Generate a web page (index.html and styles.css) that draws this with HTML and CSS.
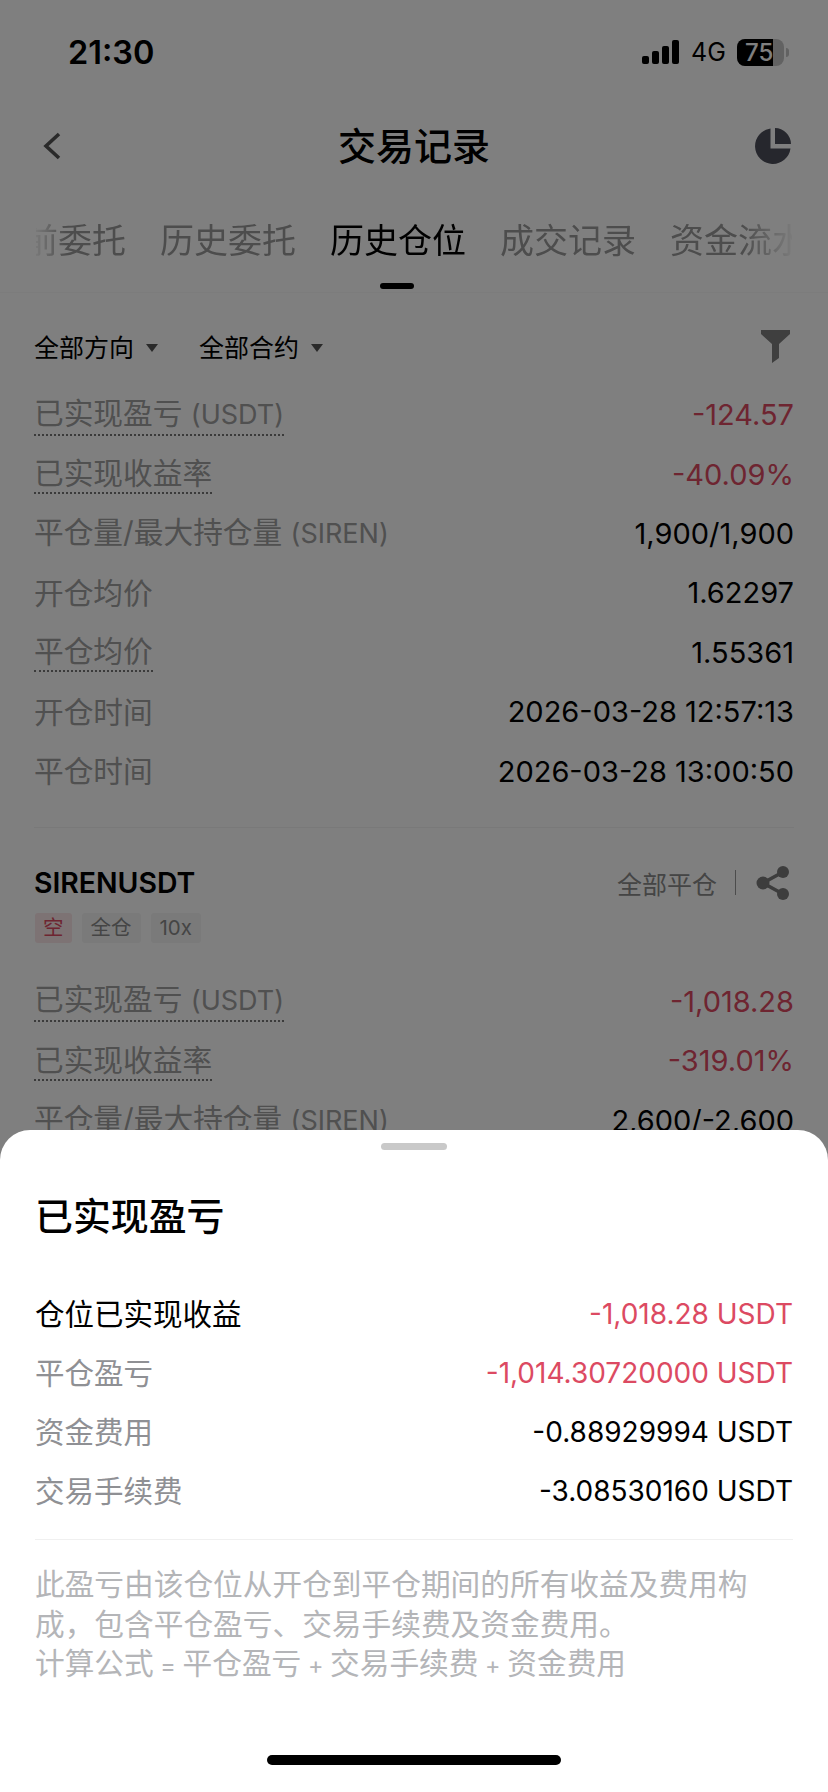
FILE: index.html
```html
<!DOCTYPE html>
<html lang="zh-CN">
<head>
    <meta charset="UTF-8">
    <meta name="viewport" content="width=device-width, initial-scale=1.0">
    <title>交易记录</title>
    <link rel="stylesheet" href="styles.css">
</head>
<body>
    <div class="page">
        <div class="status-bar">
            <span class="time">21:30</span>
            <div class="status-right">
                <svg class="signal" width="37" height="24" viewBox="0 0 37 24">
                    <rect x="0" y="16" width="7" height="8" rx="2"/>
                    <rect x="10" y="11" width="7" height="13" rx="2"/>
                    <rect x="20" y="6" width="7" height="18" rx="2"/>
                    <rect x="30" y="0" width="7" height="24" rx="2"/>
                </svg>
                <span class="network">4G</span>
                <div class="battery"><div class="battery-fill">75</div></div>
                <div class="battery-nub"></div>
            </div>
        </div>

        <div class="nav">
            <svg class="back" width="20" height="28" viewBox="0 0 20 28">
                <path d="M17 2 L4 14 L17 26" fill="none" stroke="#555" stroke-width="3.6"/>
            </svg>
            <h1 class="nav-title">交易记录</h1>
            <svg class="pie" width="36" height="36" viewBox="0 0 36 36">
                <path d="M15.5 0.5 V20.5 H35.5 A17.8 17.8 0 1 1 15.5 0.5 Z" fill="#4c4e5a"/>
                <path d="M20 0 A16.5 16.5 0 0 1 36 16 H20 Z" fill="#4c4e5a"/>
            </svg>
        </div>

        <div class="tabs">
            <div class="tabs-inner">
                <span class="tab">当前委托</span>
                <span class="tab">历史委托</span>
                <span class="tab tab-active">历史仓位</span>
                <span class="tab">成交记录</span>
                <span class="tab">资金流水</span>
            </div>
        </div>
        <div class="tab-line"><div class="tab-mark"></div></div>

        <div class="filters">
            <span class="filter">全部方向<i class="caret"></i></span>
            <span class="filter">全部合约<i class="caret"></i></span>
            <svg class="funnel" width="29" height="33" viewBox="0 0 29 33">
                <path d="M0 0 H29 V4 L18 14 V28 L11 33 V14 L0 4 Z" fill="#7e7e7e"/>
            </svg>
        </div>

        <div class="rows">
            <div class="row"><span class="label dotted">已实现盈亏 <span class="unit">(USDT)</span></span><span class="value red">-124.57</span></div>
            <div class="row"><span class="label dotted">已实现收益率</span><span class="value red">-40.09%</span></div>
            <div class="row"><span class="label">平仓量/最大持仓量 <span class="unit">(SIREN)</span></span><span class="value">1,900/1,900</span></div>
            <div class="row"><span class="label">开仓均价</span><span class="value">1.62297</span></div>
            <div class="row"><span class="label dotted">平仓均价</span><span class="value">1.55361</span></div>
            <div class="row"><span class="label">开仓时间</span><span class="value">2026-03-28 12:57:13</span></div>
            <div class="row"><span class="label">平仓时间</span><span class="value">2026-03-28 13:00:50</span></div>
        </div>

        <div class="card-divider"></div>

        <div class="card-head">
            <span class="symbol">SIRENUSDT</span>
            <div class="card-actions">
                <span class="close-all">全部平仓</span>
                <span class="action-sep"></span>
                <svg class="share" width="34" height="34" viewBox="0 0 34 34">
                    <path d="M27 6 L7 17 L27 28" fill="none" stroke="#7a7a7a" stroke-width="3.5"/>
                    <circle cx="27" cy="6" r="6" fill="#7a7a7a"/>
                    <circle cx="7" cy="17" r="6.5" fill="#7a7a7a"/>
                    <circle cx="27" cy="28" r="6" fill="#7a7a7a"/>
                </svg>
            </div>
        </div>
        <div class="tags">
            <span class="tag tag-short">空</span>
            <span class="tag">全仓</span>
            <span class="tag">10x</span>
        </div>

        <div class="rows">
            <div class="row"><span class="label dotted">已实现盈亏 <span class="unit">(USDT)</span></span><span class="value red">-1,018.28</span></div>
            <div class="row"><span class="label dotted">已实现收益率</span><span class="value red">-319.01%</span></div>
            <div class="row"><span class="label">平仓量/最大持仓量 <span class="unit">(SIREN)</span></span><span class="value">2,600/-2,600</span></div>
        </div>

        <div class="overlay"></div>

        <div class="sheet">
            <div class="handle"></div>
            <h2 class="sheet-title">已实现盈亏</h2>
            <div class="sheet-rows">
                <div class="sheet-row"><span class="sheet-main">仓位已实现收益</span><span class="sheet-red">-1,018.28 USDT</span></div>
                <div class="sheet-row"><span class="sheet-label">平仓盈亏</span><span class="sheet-red">-1,014.30720000 USDT</span></div>
                <div class="sheet-row"><span class="sheet-label">资金费用</span><span>-0.88929994 USDT</span></div>
                <div class="sheet-row"><span class="sheet-label">交易手续费</span><span>-3.08530160 USDT</span></div>
            </div>
            <p class="note">此盈亏由该仓位从开仓到平仓期间的所有收益及费用构成，包含平仓盈亏、交易手续费及资金费用。<br>计算公式<span class="op"> = </span>平仓盈亏<span class="op"> + </span>交易手续费<span class="op"> + </span>资金费用</p>
            <div class="home-bar"></div>
        </div>
    </div>
</body>
</html>
```

FILE: styles.css
```css
* {
    margin: 0;
    padding: 0;
    box-sizing: border-box;
}

body {
    background: #fff;
    font-family: Inter, 'Noto Sans CJK SC', sans-serif;
    color: #000;
}

.page {
    position: relative;
    width: 828px;
    height: 1792px;
    overflow: hidden;
    background: #fff;
}

.status-bar {
    height: 104px;
    padding: 0 39px 0 68px;
    display: flex;
    align-items: center;
    justify-content: space-between;
}

.time {
    font-size: 32.5px;
    font-weight: 600;
}

.status-right {
    display: flex;
    align-items: center;
}

.network {
    font-size: 25px;
    margin-left: 12px;
    width: 46px;
}

.battery {
    width: 47px;
    height: 27px;
    border-radius: 8px;
    background: #c4c4c4;
    overflow: hidden;
}

.battery-fill {
    width: 36px;
    height: 27px;
    background: #000;
    color: #fff;
    font-size: 24px;
    font-weight: 500;
    line-height: 27px;
    padding-left: 8px;
    white-space: nowrap;
}

.battery-nub {
    width: 3px;
    height: 9px;
    margin-left: 2px;
    border-radius: 0 3px 3px 0;
    background: #c4c4c4;
}

.nav {
    height: 84px;
    padding: 0 37px 0 42px;
    display: flex;
    align-items: center;
    justify-content: space-between;
}

.back {
    margin-right: 11px;
}

.nav-title {
    font-size: 38px;
    font-weight: 500;
    padding-bottom: 6px;
}

.tabs {
    height: 104px;
    margin: 0 36px;
    overflow: hidden;
    -webkit-mask-image: linear-gradient(90deg, rgba(0,0,0,0.15), #000 30px, #000 calc(100% - 50px), rgba(0,0,0,0.1));
    mask-image: linear-gradient(90deg, rgba(0,0,0,0.15), #000 30px, #000 calc(100% - 50px), rgba(0,0,0,0.1));
}

.tabs-inner {
    display: flex;
    gap: 34px;
    margin-left: -46px;
    padding-top: 25px;
    white-space: nowrap;
}

.tab {
    font-size: 34px;
    line-height: 56px;
    color: #9a9a9a;
}

.tab-active {
    color: #000;
}

.tab-line {
    position: relative;
    height: 1px;
    background: #f8f8f8;
}

.tab-mark {
    position: absolute;
    left: 380px;
    top: -9px;
    width: 34px;
    height: 6px;
    border-radius: 3px;
    background: #000;
}

.filters {
    height: 92px;
    padding: 14px 38px 0 34px;
    display: flex;
    align-items: center;
    gap: 41px;
}

.filter {
    font-size: 25px;
    display: flex;
    align-items: center;
    color: #000;
}

.caret {
    width: 0;
    height: 0;
    margin-left: 12px;
    margin-top: 3px;
    border-left: 6px solid transparent;
    border-right: 6px solid transparent;
    border-top: 8px solid #555;
}

.funnel {
    margin-left: auto;
}

.row {
    height: 59.4px;
    padding: 0 34px;
    display: flex;
    align-items: center;
    justify-content: space-between;
}

.label {
    font-size: 29.7px;
    line-height: 38px;
    color: #a0a0a0;
}

.unit {
    font-size: 27px;
}

.dotted {
    border-bottom: 2px dotted #777;
}

.value {
    font-size: 29px;
}

.red {
    color: #dc4a62;
}

.card-divider {
    height: 1px;
    margin: 26px 34px 0;
    background: #f2f2f2;
}

.card-head {
    height: 60px;
    margin-top: 25px;
    padding: 0 38px 0 34px;
    display: flex;
    align-items: center;
    justify-content: space-between;
}

.symbol {
    font-size: 28.4px;
    font-weight: 600;
}

.card-actions {
    display: flex;
    align-items: center;
}

.close-all {
    font-size: 25px;
    color: #8a8a8a;
}

.action-sep {
    width: 1px;
    height: 25px;
    margin: 0 20px 0 18px;
    background: #999;
}

.tags {
    display: flex;
    gap: 10px;
    margin-top: 0;
    padding: 0 35px;
    height: 30px;
}

.tag {
    height: 30px;
    padding: 0 9px;
    font-size: 20.5px;
    line-height: 30px;
    border-radius: 3px;
    color: #8a8a8a;
    background: #f5f5f5;
}

.tag-short {
    padding: 0 8px;
    color: #dc4a62;
    background: #fbe6e8;
}

.tags + .rows {
    margin-top: 29px;
}

.overlay {
    position: absolute;
    inset: 0;
    background: rgba(0, 0, 0, 0.5);
}

.sheet {
    position: absolute;
    left: 0;
    right: 0;
    top: 1130px;
    bottom: 0;
    padding: 13px 35px 0;
    border-radius: 30px 30px 0 0;
    background: #fff;
}

.handle {
    width: 66px;
    height: 7px;
    margin: 0 auto;
    border-radius: 4px;
    background: #c9c9c9;
}

.sheet-title {
    margin-top: 41px;
    font-size: 37.9px;
    line-height: 50px;
    font-weight: 500;
}

.sheet-rows {
    margin-top: 43px;
    padding-bottom: 19px;
    border-bottom: 1px solid #f0f0f0;
}

.sheet-row {
    height: 59px;
    display: flex;
    align-items: center;
    justify-content: space-between;
    font-size: 28px;
}

.sheet-main,
.sheet-label {
    font-size: 29.5px;
    padding-bottom: 3px;
}

.sheet-label {
    color: #8f9094;
}

.sheet-red {
    color: #dc4a62;
}

.note {
    margin-top: 25px;
    font-size: 29.7px;
    line-height: 39.5px;
    color: #b4b5b8;
}

.op {
    font-size: 23.5px;
}

.home-bar {
    position: absolute;
    left: 267px;
    top: 625px;
    width: 294px;
    height: 10px;
    border-radius: 5px;
    background: #000;
}
```
